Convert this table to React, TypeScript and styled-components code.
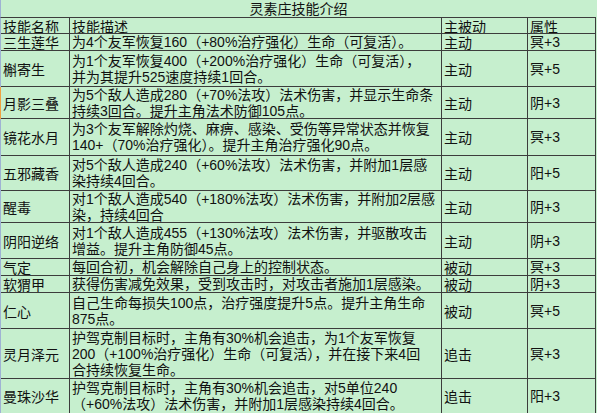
import React from "react";
import styled, { createGlobalStyle } from "styled-components";

const Global = createGlobalStyle`
  html, body { margin: 0; padding: 0; background: #c6efce; }
  body { font-family: "Liberation Sans", "Noto Sans CJK SC", sans-serif; }
`;

const LINE = "#3c3c3c";

const Sheet = styled.div`
  width: 597px;
  height: 413px;
  overflow: hidden;
  background: #c6efce;
  color: #111;
  font-size: 14px;
  display: flex;
  flex-direction: column;
`;

const TitleRow = styled.div`
  height: 17px;
  border-bottom: 1px solid ${LINE};
  border-left: 1px solid #9fb2d4;
  width: 595px;
  text-align: center;
  line-height: 16px;
  font-family: "Noto Sans CJK SC", sans-serif;
  flex: none;
`;

const Row = styled.div<{ $h: number; $edge?: string }>`
  display: grid;
  grid-template-columns: 69px 372px 86px 68px;
  height: ${(p) => p.$h}px;
  border-left: 1px solid ${(p) => p.$edge || "#9fb2d4"};
  flex: none;
`;

const Cell = styled.div`
  border-right: 1px solid ${LINE};
  border-bottom: 1px solid ${LINE};
  padding-left: 2px;
  display: flex;
  flex-direction: column;
  justify-content: center;
  overflow: hidden;
  white-space: nowrap;
  line-height: 16px;
`;

const NameCell = styled(Cell)`
  font-family: "Noto Sans CJK SC", sans-serif;
`;

const DescCell = styled(Cell)`
  font-family: "Liberation Sans", "Noto Sans CJK SC", sans-serif;
`;

const TypeCell = styled(Cell)`
  font-family: "Noto Sans CJK SC", sans-serif;
`;

const AttrCell = styled(Cell)`
  font-family: "Liberation Sans", "Noto Sans CJK SC", sans-serif;
`;

const Line = styled.span`
  display: block;
`;

type Skill = { name: string; desc: string[]; type: string; attr: string; h: number; edge?: string };

const skills: Skill[] = [
  { name: "三生莲华", desc: ["为4个友军恢复160（+80%治疗强化）生命（可复活）。"], type: "主动", attr: "冥+3", h: 17 },
  { name: "槲寄生", desc: ["为1个友军恢复400（+200%治疗强化）生命（可复活），", "并为其提升525速度持续1回合。"], type: "主动", attr: "冥+5", h: 36 },
  { name: "月影三叠", desc: ["为5个敌人造成280（+70%法攻）法术伤害，并显示生命条", "持续3回合。提升主角法术防御105点。"], type: "主动", attr: "阴+3", h: 32, edge: "#f0a040" },
  { name: "镜花水月", desc: ["为3个友军解除灼烧、麻痹、感染、受伤等异常状态并恢复", "140+（70%治疗强化）。提升主角治疗强化90点。"], type: "主动", attr: "冥+3", h: 37 },
  { name: "五邪藏香", desc: ["对5个敌人造成240（+60%法攻）法术伤害，并附加1层感", "染持续4回合。"], type: "主动", attr: "阳+5", h: 35 },
  { name: "醒毒", desc: ["对1个敌人造成540（+180%法攻）法术伤害，并附加2层感", "染，持续4回合"], type: "主动", attr: "阴+3", h: 32 },
  { name: "阴阳逆络", desc: ["对1个敌人造成455（+130%法攻）法术伤害，并驱散攻击", "增益。提升主角防御45点。"], type: "主动", attr: "阴+3", h: 36 },
  { name: "气定", desc: ["每回合初，机会解除自己身上的控制状态。"], type: "被动", attr: "冥+3", h: 17 },
  { name: "软猬甲", desc: ["获得伤害减免效果，受到攻击时，对攻击者施加1层感染。"], type: "被动", attr: "阴+3", h: 17 },
  { name: "仁心", desc: ["自己生命每损失100点，治疗强度提升5点。提升主角生命", "875点。"], type: "被动", attr: "冥+5", h: 36 },
  { name: "灵月泽元", desc: ["护驾克制目标时，主角有30%机会追击，为1个友军恢复", "200（+100%治疗强化）生命（可复活），并在接下来4回", "合持续恢复生命。"], type: "追击", attr: "冥+3", h: 50 },
  { name: "曼珠沙华", desc: ["护驾克制目标时，主角有30%机会追击，对5单位240", "（+60%法攻）法术伤害，并附加1层感染持续4回合。"], type: "追击", attr: "阳+3", h: 35 },
];

export default function App() {
  return (
    <>
      <Global />
      <Sheet>
        <TitleRow>灵素庄技能介绍</TitleRow>
        <Row $h={16}>
          <NameCell>技能名称</NameCell>
          <NameCell>技能描述</NameCell>
          <TypeCell>主被动</TypeCell>
          <TypeCell>属性</TypeCell>
        </Row>
        {skills.map((s) => (
          <Row key={s.name} $h={s.h} $edge={s.edge}>
            <NameCell>{s.name}</NameCell>
            <DescCell>
              {s.desc.map((l, i) => (
                <Line key={i}>{l}</Line>
              ))}
            </DescCell>
            <TypeCell>{s.type}</TypeCell>
            <AttrCell>{s.attr}</AttrCell>
          </Row>
        ))}
      </Sheet>
    </>
  );
}
